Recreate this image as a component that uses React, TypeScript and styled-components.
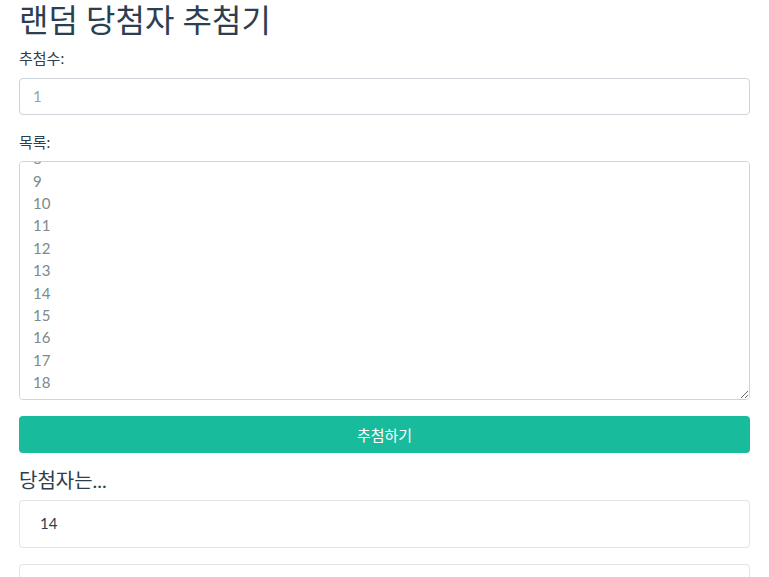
import React, { useEffect, useRef } from 'react';
import styled, { createGlobalStyle } from 'styled-components';

const GlobalStyle = createGlobalStyle`
  html, body {
    margin: 0;
    padding: 0;
    background: #ffffff;
  }
  body {
    font-family: Lato, "Noto Sans CJK KR", sans-serif;
    font-size: 15px;
    line-height: 1.5;
    color: #2c3e50;
  }
  * {
    box-sizing: border-box;
  }
`;

const Page = styled.div`
  padding: 0 19px;
  display: flex;
  flex-direction: column;
`;

const Title = styled.h1`
  margin: 0 0 8px;
  padding-top: 1px;
  font-size: 32px;
  font-weight: 400;
  line-height: 1.2;
  color: #2c3e50;
`;

const FieldGroup = styled.div`
  display: flex;
  flex-direction: column;
  margin-bottom: 16px;
`;

const Label = styled.label`
  font-size: 15px;
  margin-bottom: 8px;
  color: #2c3e50;
`;

const TextInput = styled.input`
  height: 37px;
  padding: 6px 13px;
  border: 1px solid #ced4da;
  border-radius: 4px;
  font-family: Lato, "Noto Sans CJK KR", sans-serif;
  font-size: 15px;
  color: #7b8a8b;
  outline: none;

  &::placeholder {
    color: #95a5a6;
  }
`;

const ListArea = styled.textarea`
  height: 239px;
  padding: 6px 13px;
  border: 1px solid #ced4da;
  border-radius: 4px;
  font-family: Lato, "Noto Sans CJK KR", sans-serif;
  font-size: 15px;
  line-height: 22.4px;
  color: #7b8a8b;
  outline: none;
  resize: vertical;
  scrollbar-width: none;

  &::-webkit-scrollbar {
    display: none;
  }
`;

const DrawButton = styled.button`
  height: 37px;
  border: none;
  border-radius: 4px;
  background: #18bc9c;
  color: #ffffff;
  font-family: Lato, "Noto Sans CJK KR", sans-serif;
  font-size: 15px;
  cursor: pointer;
`;

const ResultTitle = styled.h4`
  margin: 15px 0 8px;
  font-size: 20px;
  font-weight: 400;
  line-height: 1.2;
  color: #2c3e50;
`;

const ResultList = styled.ul`
  list-style: none;
  margin: 0;
  padding: 0;
  display: flex;
  flex-direction: column;
  gap: 16px;
`;

const ResultItem = styled.li`
  height: 48px;
  padding: 11px 20px;
  border: 1px solid #e4e4e4;
  border-radius: 4px;
  font-size: 15px;
  color: #2c3e50;
`;

const entries = Array.from({ length: 18 }, (_, i) => String(i + 1)).join('\n');

const App = () => {
  const areaRef = useRef<HTMLTextAreaElement>(null);

  useEffect(() => {
    const area = areaRef.current;
    if (area) {
      area.scrollTop = area.scrollHeight;
    }
  }, []);

  return (
    <>
      <GlobalStyle />
      <Page>
        <Title>랜덤 당첨자 추첨기</Title>
        <FieldGroup>
          <Label>추첨수:</Label>
          <TextInput placeholder="1" />
        </FieldGroup>
        <FieldGroup>
          <Label>목록:</Label>
          <ListArea ref={areaRef} defaultValue={entries} />
        </FieldGroup>
        <DrawButton>추첨하기</DrawButton>
        <ResultTitle>당첨자는...</ResultTitle>
        <ResultList>
          <ResultItem>14</ResultItem>
          <ResultItem />
        </ResultList>
      </Page>
    </>
  );
};

export default App;
